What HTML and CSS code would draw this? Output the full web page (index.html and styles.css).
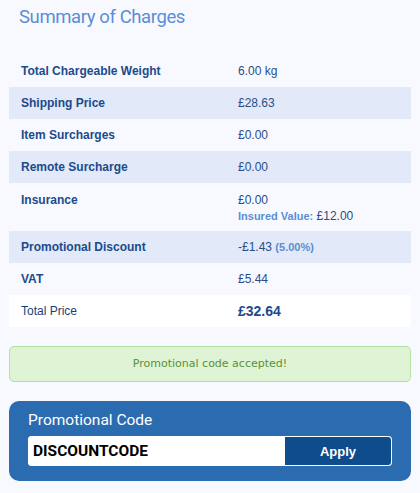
FILE: index.html
```html
<!DOCTYPE html>
<html lang="en">
  <head>
    <meta charset="UTF-8" />
    <title>Summary of Charges</title>
    <link rel="stylesheet" href="styles.css">
  </head>
  <body>
    <h1 class="title">Summary of Charges</h1>

    <table class="charges">
      <tr>
        <th>Total Chargeable Weight</th>
        <td>6.00 kg</td>
      </tr>
      <tr class="shade">
        <th>Shipping Price</th>
        <td>&pound;28.63</td>
      </tr>
      <tr>
        <th>Item Surcharges</th>
        <td>&pound;0.00</td>
      </tr>
      <tr class="shade">
        <th>Remote Surcharge</th>
        <td>&pound;0.00</td>
      </tr>
      <tr class="tall">
        <th>Insurance</th>
        <td>
          &pound;0.00
          <div class="insured"><span class="insured-label">Insured Value:</span> &pound;12.00</div>
        </td>
      </tr>
      <tr class="shade">
        <th>Promotional Discount</th>
        <td>-&pound;1.43 <span class="percent">(5.00%)</span></td>
      </tr>
      <tr>
        <th>VAT</th>
        <td>&pound;5.44</td>
      </tr>
      <tr class="total">
        <th>Total Price</th>
        <td>&pound;32.64</td>
      </tr>
    </table>

    <div class="alert-success">Promotional code accepted!</div>

    <div class="promo-box">
      <label class="promo-label" for="promo">Promotional Code</label>
      <div class="promo-row">
        <input id="promo" class="promo-input" type="text" value="DISCOUNTCODE" />
        <button class="promo-btn">Apply</button>
      </div>
    </div>
  </body>
</html>
```

FILE: styles.css
```css
body {
  margin: 0;
  padding: 0 9px;
  background: #f8f9fe;
  font-family: "Liberation Sans", Arial, sans-serif;
}
.title {
  margin: 0;
  padding: 6px 10px 0;
  height: 55px;
  box-sizing: border-box;
  font-family: Roboto, sans-serif;
  font-size: 18.5px;
  letter-spacing: -0.4px;
  font-weight: normal;
  color: #5a8ed5;
}
.charges {
  width: 100%;
  border-collapse: collapse;
}
.charges tr {
  height: 32px;
}
.charges th,
.charges td {
  padding: 0 12px;
  font-size: 12px;
  text-align: left;
  vertical-align: middle;
}
.charges th {
  width: 193px;
  color: #1c4a8c;
}
.charges td {
  color: #2a4d87;
}
.charges .shade {
  background: #e2e9f8;
}
.charges .tall {
  height: 48px;
}
.charges .tall th,
.charges .tall td {
  vertical-align: top;
  padding-top: 10px;
}
.insured {
  margin-top: 2px;
  font-size: 12px;
}
.insured-label {
  font-size: 11px;
  font-weight: bold;
  color: #5a8ed5;
}
.percent {
  font-size: 11px;
  font-weight: bold;
  color: #5a8ed5;
}
.charges .total {
  background: #fff;
}
.charges .total th {
  font-weight: normal;
  color: #173f7c;
}
.charges .total td {
  font-weight: bold;
  font-size: 14px;
  color: #1c4a8c;
}
.alert-success {
  margin-top: 19px;
  height: 34px;
  line-height: 34px;
  background: #dff4d4;
  border: 1px solid #b6e0a0;
  border-radius: 5px;
  text-align: center;
  font-family: "DejaVu Sans", sans-serif;
  font-size: 11px;
  color: #5c8f3a;
}
.promo-box {
  margin-top: 19px;
  background: #2b6cb0;
  border-radius: 10px;
  padding: 10px 19px 15px;
}
.promo-label {
  display: block;
  color: #fff;
  font-family: Roboto, sans-serif;
  font-size: 15.5px;
  margin-bottom: 7px;
}
.promo-row {
  display: flex;
  height: 30px;
  border-radius: 4px;
  overflow: hidden;
  background: #fff;
}
.promo-input {
  flex: 1;
  min-width: 0;
  border: none;
  padding: 0 5px;
  font-family: Roboto, sans-serif;
  font-weight: bold;
  font-size: 15.5px;
  color: #000;
  outline: none;
}
.promo-btn {
  width: 107px;
  border: 1px solid #fff;
  border-left: none;
  border-radius: 0 4px 4px 0;
  background: #0f4c8c;
  color: #fff;
  font-family: "Liberation Sans", Arial, sans-serif;
  font-weight: bold;
  font-size: 13px;
}
```
